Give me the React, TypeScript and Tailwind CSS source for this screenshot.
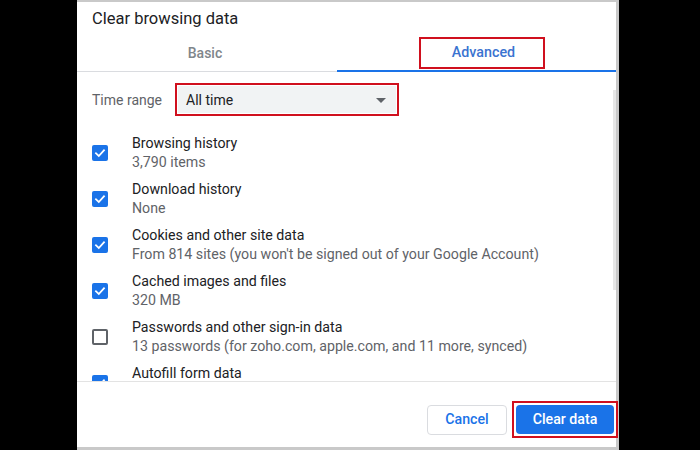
import React from "react";

const items = [
  { title: "Browsing history", sub: "3,790 items", checked: true },
  { title: "Download history", sub: "None", checked: true },
  { title: "Cookies and other site data", sub: "From 814 sites (you won't be signed out of your Google Account)", checked: true },
  { title: "Cached images and files", sub: "320 MB", checked: true },
  { title: "Passwords and other sign-in data", sub: "13 passwords (for zoho.com, apple.com, and 11 more, synced)", checked: false },
  { title: "Autofill form data", sub: "", checked: true },
];

function Check({ checked }: { checked: boolean }) {
  if (checked) {
    return (
      <div className="w-[16px] h-[16px] rounded-[2px] bg-[#1a73e8] flex items-center justify-center shrink-0">
        <svg width="12" height="12" viewBox="0 0 12 12">
          <path d="M2 6.3 L4.8 9 L10 3.2" stroke="white" strokeWidth="1.8" fill="none" strokeLinecap="square" />
        </svg>
      </div>
    );
  }
  return <div className="w-[16px] h-[16px] rounded-[2px] border-2 border-[#5f6368] shrink-0" />;
}

export default function App() {
  return (
    <div className="w-[700px] h-[450px] bg-black pl-[77px] overflow-hidden" style={{ fontFamily: "Roboto, 'Noto Sans', sans-serif" }}>
      <div className="w-[542px] h-[450px] bg-white border-t-2 border-b-[3px] border-r-[3px] border-[#c9c9c9] flex flex-col">
        <div className="pl-[15px] pt-[6px] h-[32px] text-[16.5px] leading-[22px] text-[#202124]">Clear browsing data</div>
        <div className="flex h-[38px] border-b border-[#dadce0]">
          <div className="w-[260px] flex items-center justify-center pr-[4px] pt-[2px] text-[14px] font-medium text-[#80868b]">Basic</div>
          <div className="flex-1 flex items-center justify-center pl-[10px] border-b-2 border-[#1a73e8] -mb-px">
            <div className="w-[126px] h-[32px] mt-[1px] border-2 border-[#d0101e] flex items-center justify-center pl-[4px] pt-px text-[14.3px] font-medium text-[#3b73d0]">
              Advanced
            </div>
          </div>
        </div>
        <div className="flex h-[310px] border-b border-[#e3e3e3]">
          <div className="flex-1 overflow-hidden">
            <div className="flex items-center pl-[15px] mt-[11px] h-[33px]">
              <div className="w-[83px] text-[14px] text-[#5f6368] pt-[2px]">Time range</div>
              <div className="w-[224px] h-[33px] border-2 border-[#d0101e] p-px">
                <div className="h-full bg-[#f1f3f4] flex items-center justify-between pl-[8px] pr-[10px] pt-[2px] text-[14px] text-[#202124]">
                  <span>All time</span>
                  <svg width="10" height="5" viewBox="0 0 10 5">
                    <path d="M0 0 L10 0 L5 5 Z" fill="#5f6368" />
                  </svg>
                </div>
              </div>
            </div>
            <div className="mt-[14px]">
              {items.map((it) => (
                <div key={it.title} className="flex items-center h-[46px] pl-[15px]">
                  <div className="w-[40px]">
                    <Check checked={it.checked} />
                  </div>
                  <div className="flex flex-col text-[14.2px] leading-[19px]">
                    <span className="text-[#202124]">{it.title}</span>
                    <span className="text-[#5f6368] h-[19px]">{it.sub}</span>
                  </div>
                </div>
              ))}
            </div>
          </div>
          <div className="w-[3px] flex flex-col">
            <div className="h-[18px]" />
            <div className="h-[200px] bg-[#e6e6e6]" />
          </div>
        </div>
        <div className="flex justify-end items-start pt-[19px]">
          <div className="mt-[4px] w-[80px] h-[30px] border border-[#dadce0] rounded-[4px] flex items-center justify-center text-[14.2px] font-medium text-[#1a73e8]">
            Cancel
          </div>
          <div className="ml-[5px] w-[106px] h-[37px] border-2 border-[#d0101e] p-[2px] -mr-[2px]">
            <div className="w-full h-full bg-[#1a73e8] rounded-[4px] flex items-center justify-center text-[14.2px] font-medium text-white">
              Clear data
            </div>
          </div>
        </div>
      </div>
    </div>
  );
}
